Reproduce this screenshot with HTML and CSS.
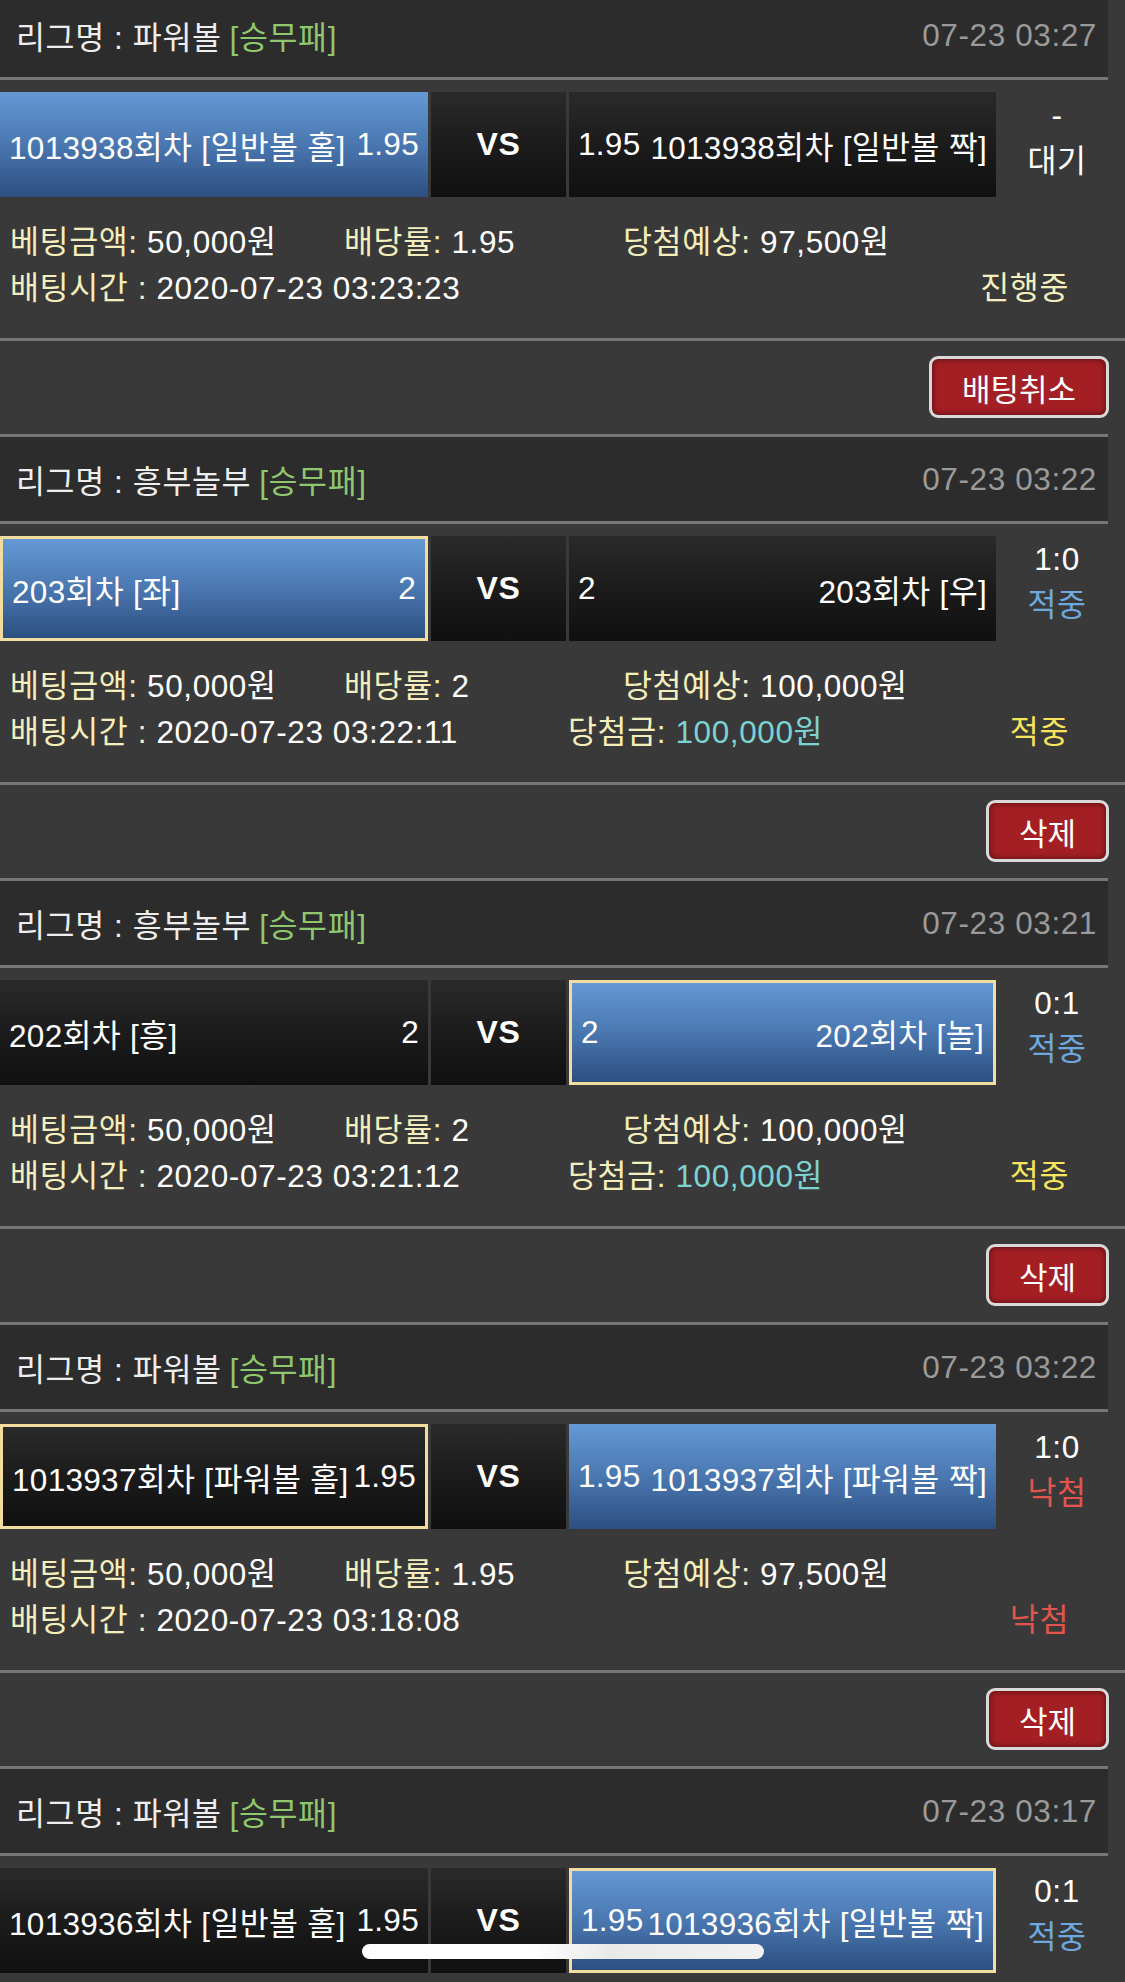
FILE: index.html
```html
<!DOCTYPE html>
<html lang="ko">
<head>
<meta charset="utf-8">
<title>배팅내역</title>
<link rel="stylesheet" href="styles.css">
</head>
<body>
<div class="list">

  <section class="bet">
    <div class="league"><span class="lname">리그명 : 파워볼</span><span class="ltype">[승무패]</span><span class="ldate">07-23 03:27</span></div>
    <div class="match">
      <div class="team blue"><span>1013938회차 [일반볼 홀]</span><span>1.95</span></div>
      <div class="vs">VS</div>
      <div class="team dark"><span>1.95</span><span>1013938회차 [일반볼 짝]</span></div>
      <div class="result"><div class="score">-</div><div class="state wait">대기</div></div>
    </div>
    <div class="info">
      <div class="row"><div class="c1"><span class="lbl">베팅금액:</span> 50,000원</div><div class="c2"><span class="lbl">배당률:</span> 1.95</div><div class="c3"><span class="lbl">당첨예상:</span> 97,500원</div></div>
      <div class="row"><div class="d1"><span class="lbl">배팅시간 :</span> 2020-07-23 03:23:23</div><div class="d2"></div><div class="status ing">진행중</div></div>
    </div>
    <div class="actions"><button class="btn">배팅취소</button></div>
  </section>

  <section class="bet">
    <div class="league"><span class="lname">리그명 : 흥부놀부</span><span class="ltype">[승무패]</span><span class="ldate">07-23 03:22</span></div>
    <div class="match">
      <div class="team blue sel"><span>203회차 [좌]</span><span>2</span></div>
      <div class="vs">VS</div>
      <div class="team dark"><span>2</span><span>203회차 [우]</span></div>
      <div class="result"><div class="score">1:0</div><div class="state hit">적중</div></div>
    </div>
    <div class="info">
      <div class="row"><div class="c1"><span class="lbl">베팅금액:</span> 50,000원</div><div class="c2"><span class="lbl">배당률:</span> 2</div><div class="c3"><span class="lbl">당첨예상:</span> 100,000원</div></div>
      <div class="row"><div class="d1"><span class="lbl">배팅시간 :</span> 2020-07-23 03:22:11</div><div class="d2"><span class="lbl">당첨금:</span> <span class="won">100,000원</span></div><div class="status win">적중</div></div>
    </div>
    <div class="actions"><button class="btn">삭제</button></div>
  </section>

  <section class="bet">
    <div class="league"><span class="lname">리그명 : 흥부놀부</span><span class="ltype">[승무패]</span><span class="ldate">07-23 03:21</span></div>
    <div class="match">
      <div class="team dark"><span>202회차 [흥]</span><span>2</span></div>
      <div class="vs">VS</div>
      <div class="team blue sel"><span>2</span><span>202회차 [놀]</span></div>
      <div class="result"><div class="score">0:1</div><div class="state hit">적중</div></div>
    </div>
    <div class="info">
      <div class="row"><div class="c1"><span class="lbl">베팅금액:</span> 50,000원</div><div class="c2"><span class="lbl">배당률:</span> 2</div><div class="c3"><span class="lbl">당첨예상:</span> 100,000원</div></div>
      <div class="row"><div class="d1"><span class="lbl">배팅시간 :</span> 2020-07-23 03:21:12</div><div class="d2"><span class="lbl">당첨금:</span> <span class="won">100,000원</span></div><div class="status win">적중</div></div>
    </div>
    <div class="actions"><button class="btn">삭제</button></div>
  </section>

  <section class="bet">
    <div class="league"><span class="lname">리그명 : 파워볼</span><span class="ltype">[승무패]</span><span class="ldate">07-23 03:22</span></div>
    <div class="match">
      <div class="team dark sel"><span>1013937회차 [파워볼 홀]</span><span>1.95</span></div>
      <div class="vs">VS</div>
      <div class="team blue"><span>1.95</span><span>1013937회차 [파워볼 짝]</span></div>
      <div class="result"><div class="score">1:0</div><div class="state miss">낙첨</div></div>
    </div>
    <div class="info">
      <div class="row"><div class="c1"><span class="lbl">베팅금액:</span> 50,000원</div><div class="c2"><span class="lbl">배당률:</span> 1.95</div><div class="c3"><span class="lbl">당첨예상:</span> 97,500원</div></div>
      <div class="row"><div class="d1"><span class="lbl">배팅시간 :</span> 2020-07-23 03:18:08</div><div class="d2"></div><div class="status lose">낙첨</div></div>
    </div>
    <div class="actions"><button class="btn">삭제</button></div>
  </section>

  <section class="bet">
    <div class="league"><span class="lname">리그명 : 파워볼</span><span class="ltype">[승무패]</span><span class="ldate">07-23 03:17</span></div>
    <div class="match">
      <div class="team dark"><span>1013936회차 [일반볼 홀]</span><span>1.95</span></div>
      <div class="vs">VS</div>
      <div class="team blue sel"><span>1.95</span><span>1013936회차 [일반볼 짝]</span></div>
      <div class="result"><div class="score">0:1</div><div class="state hit">적중</div></div>
    </div>
  </section>

</div>
<div class="home-bar"></div>
</body>
</html>
```

FILE: styles.css
```css
html, body {
  margin: 0;
  padding: 0;
  height: 1982px;
  overflow: hidden;
  background: #393939;
}

body {
  font-family: "Liberation Sans", "Noto Sans CJK KR", sans-serif;
  font-size: 31.5px;
  letter-spacing: 0.6px;
  color: #ffffff;
}

.list {
  margin-top: -10px;
}

.bet {
  width: 1125px;
}

.league {
  width: 1108px;
  box-sizing: border-box;
  height: 90px;
  border-top: 3px solid #767676;
  border-bottom: 3px solid #767676;
  background: #2c2c2c;
  display: flex;
  align-items: center;
  padding: 0 11px 0 16px;
  white-space: nowrap;
}

.lname {
  color: #eeeeee;
}

.ltype {
  color: #8fc76f;
  margin-left: 8px;
}

.ldate {
  margin-left: auto;
  color: #9a9a9a;
}

.match {
  margin-top: 12px;
  width: 1108px;
  height: 105px;
  display: flex;
  gap: 3px;
}

.team {
  box-sizing: border-box;
  height: 105px;
  display: flex;
  align-items: center;
  justify-content: space-between;
  padding: 0 9px;
  white-space: nowrap;
  overflow: hidden;
  letter-spacing: 0.3px;
}

.match .team:first-child {
  width: 428px;
}

.match .team:nth-child(3) {
  width: 427px;
}

.blue {
  background: linear-gradient(180deg, #6499d5 0%, #4a77b0 50%, #2c4f80 100%);
}

.dark {
  background: linear-gradient(180deg, #2a2a2a 0%, #1a1a1a 55%, #101010 100%);
}

.sel {
  border: 3px solid #f2dc9e;
}

.vs {
  width: 135px;
  height: 105px;
  display: flex;
  align-items: center;
  justify-content: center;
  font-weight: bold;
  font-size: 32px;
  background: linear-gradient(180deg, #2a2a2a 0%, #1a1a1a 55%, #101010 100%);
}

.result {
  flex: 1;
  margin-left: -3px;
  padding-left: 10px;
  text-align: center;
  line-height: 46px;
}

.score {
  color: #ffffff;
}

.state.wait {
  color: #ffffff;
}

.state.hit {
  color: #6fa8de;
}

.state.miss {
  color: #e2544d;
}

.info {
  box-sizing: border-box;
  height: 141px;
  padding: 22px 56px 27px 10px;
}

.row {
  display: flex;
  height: 46px;
  line-height: 46px;
  white-space: nowrap;
}

.lbl {
  color: #f4eebd;
}

.c1 {
  width: 334px;
}

.c2 {
  width: 279px;
}

.d1 {
  width: 558px;
}

.d2 {
  flex: 1;
}

.won {
  color: #7dd2d2;
}

.status.ing {
  color: #f4eebd;
}

.status.win {
  color: #f6e45c;
}

.status.lose {
  color: #e2544d;
}

.actions {
  border-top: 3px solid #767676;
  height: 96px;
  box-sizing: border-box;
  width: 1125px;
  padding: 15px 16px 0 0;
  display: flex;
  justify-content: flex-end;
  align-items: flex-start;
}

.btn {
  height: 62px;
  box-sizing: border-box;
  padding: 0 30px;
  background: #a41f24;
  color: #ffffff;
  font-family: "Liberation Sans", "Noto Sans CJK KR", sans-serif;
  font-size: 31px;
  border: 3px solid #d9d9d9;
  border-radius: 9px;
  box-shadow: inset 0 0 6px rgba(0, 0, 0, 0.55);
}

.home-bar {
  position: fixed;
  top: 1944px;
  left: 362px;
  width: 402px;
  height: 15px;
  border-radius: 8px;
  background: linear-gradient(90deg, #ffffff 0%, #ffffff 42%, #e9e9e9 62%, #f1f1f1 100%);
}
```
